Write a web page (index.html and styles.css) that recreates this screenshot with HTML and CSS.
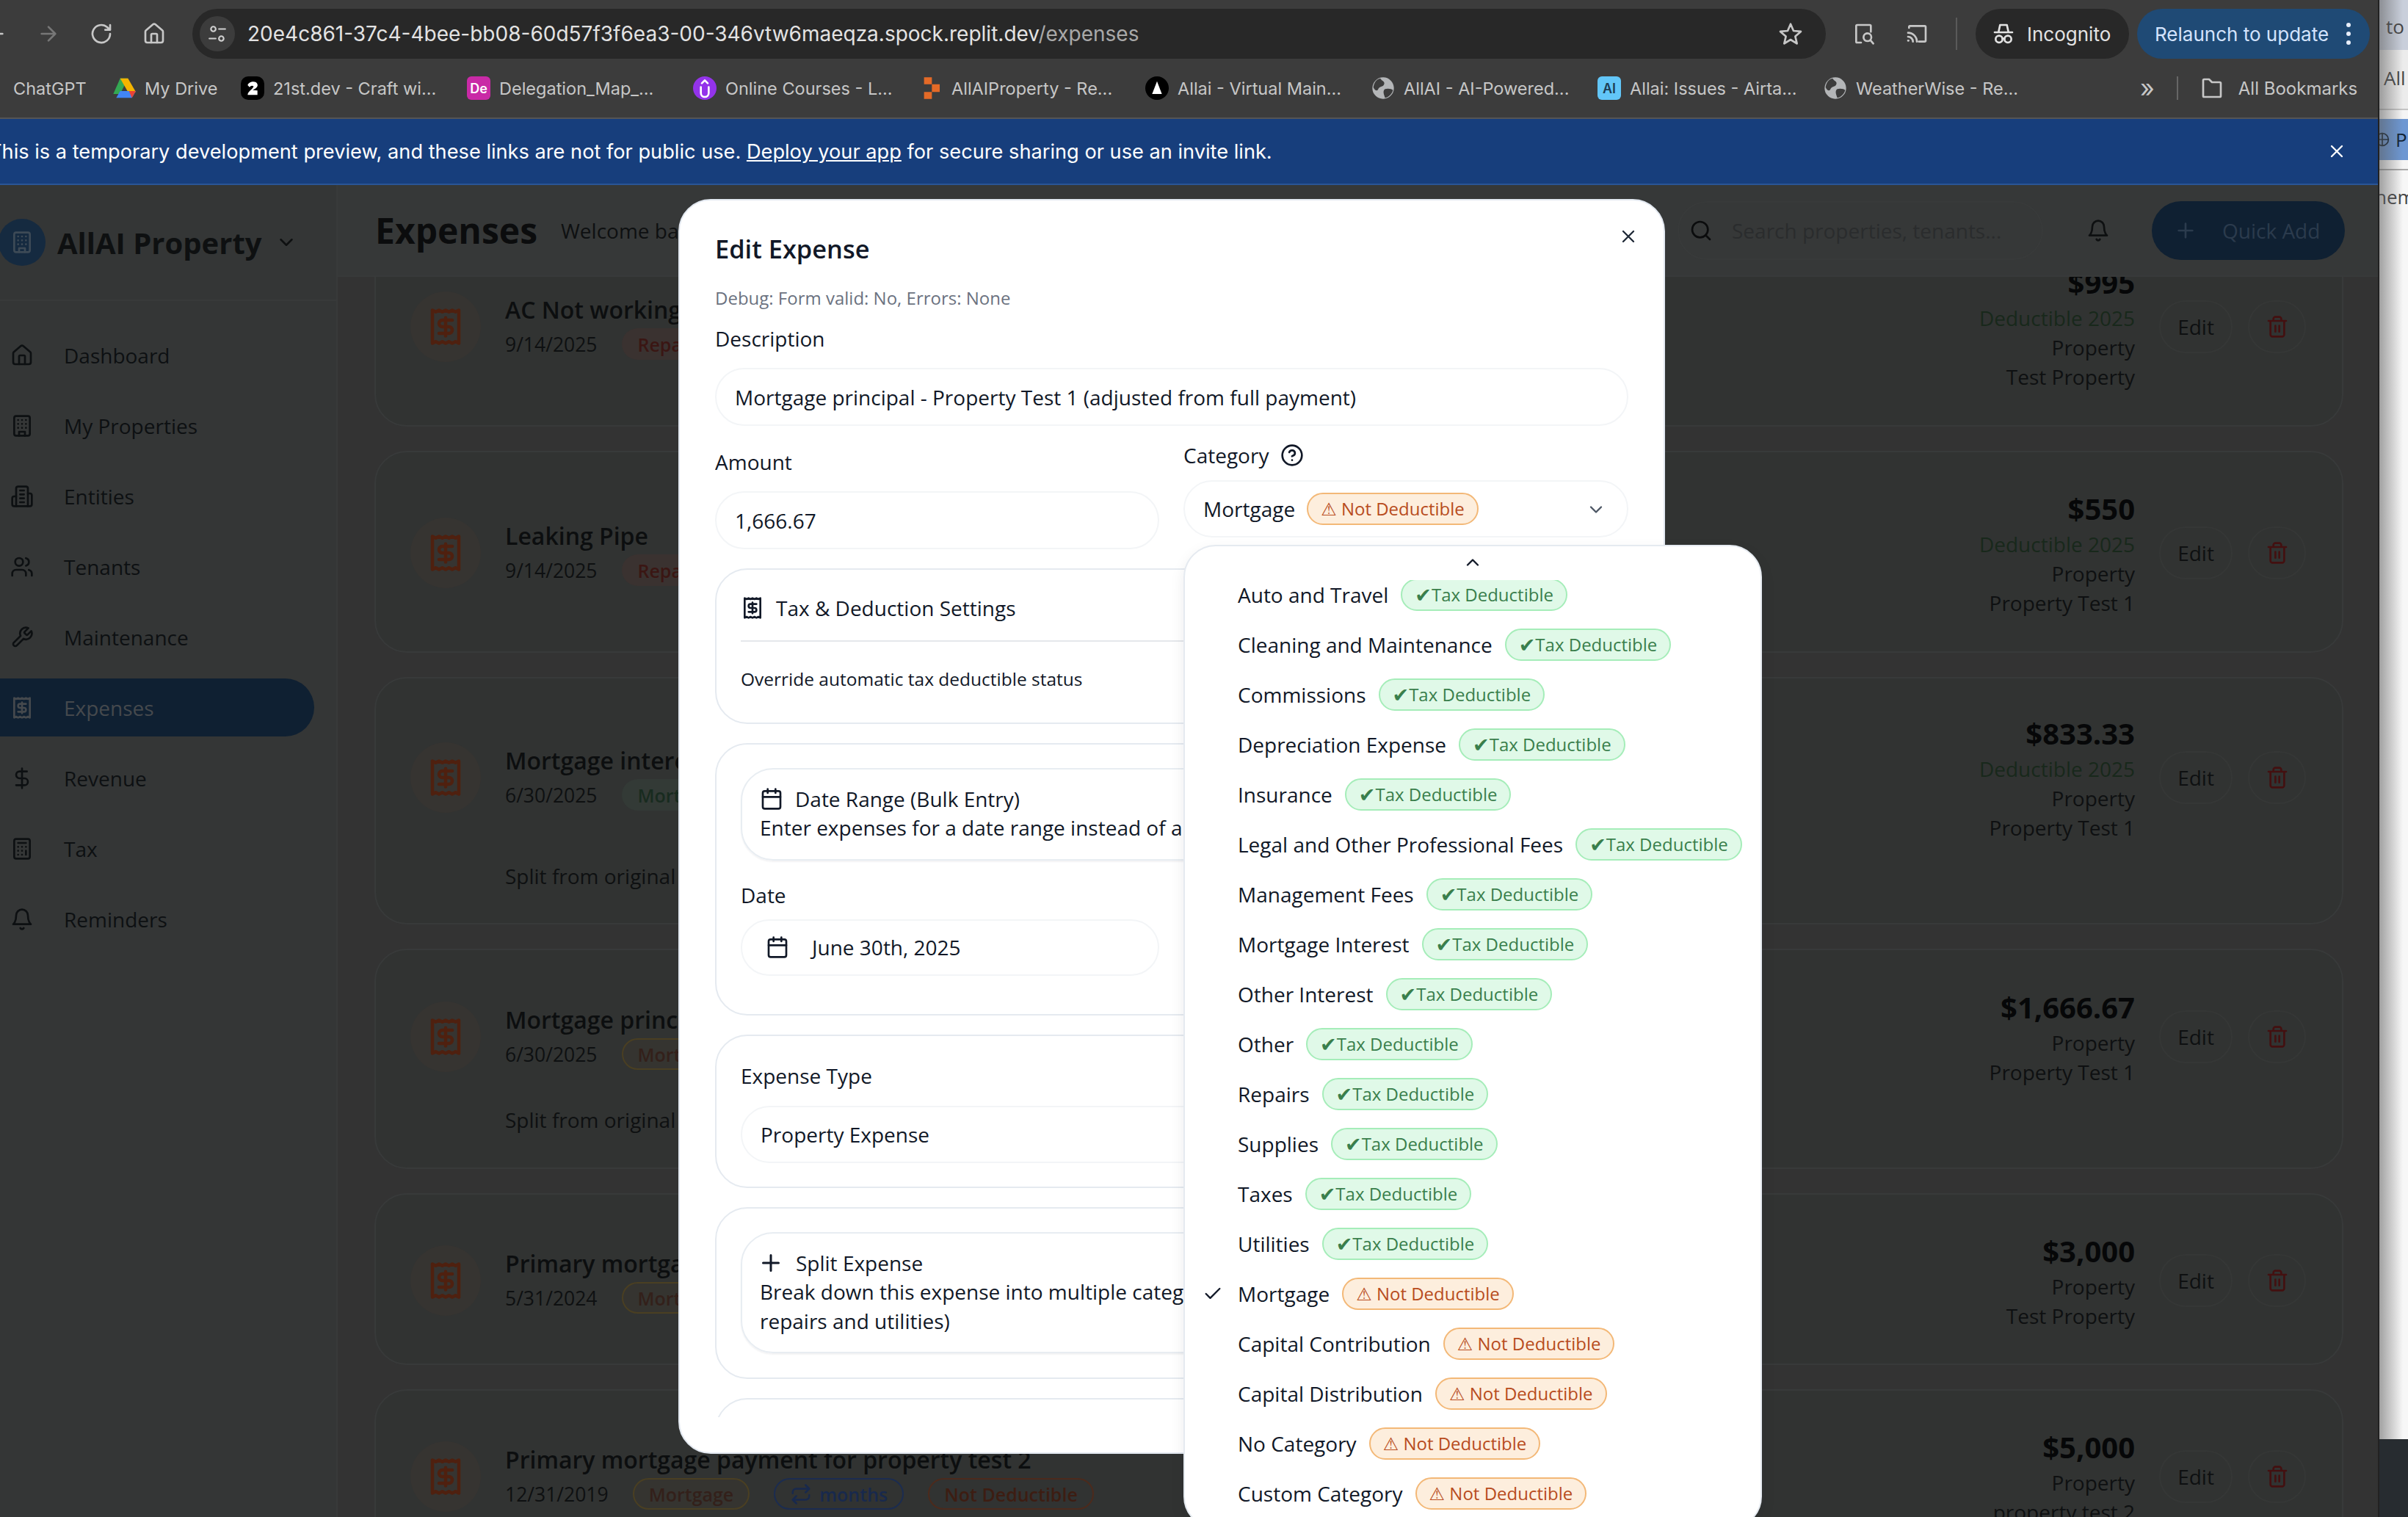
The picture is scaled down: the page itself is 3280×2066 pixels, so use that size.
FILE: index.html
```html
<!DOCTYPE html>
<html lang="en">
<head>
    <meta charset="UTF-8">
    <meta name="viewport" content="width=device-width, initial-scale=1.0">
    <title>Expenses - AllAI Property</title>
    <link rel="stylesheet" href="styles.css">
</head>
<body>
    <!-- lucide-style icons, reused with <use> -->
    <svg class="sprite" aria-hidden="true">
        <symbol id="i-home" viewBox="0 0 24 24"><path d="M15 21v-8a1 1 0 0 0-1-1h-4a1 1 0 0 0-1 1v8"/><path d="M3 10a2 2 0 0 1 .709-1.528l7-5.999a2 2 0 0 1 2.582 0l7 5.999A2 2 0 0 1 21 10v9a2 2 0 0 1-2 2H5a2 2 0 0 1-2-2z"/></symbol>
        <symbol id="i-building" viewBox="0 0 24 24"><rect x="4" y="2" width="16" height="20" rx="2"/><path d="M9 22v-4h6v4M8 6h.01M16 6h.01M12 6h.01M12 10h.01M12 14h.01M16 10h.01M16 14h.01M8 10h.01M8 14h.01"/></symbol>
        <symbol id="i-entities" viewBox="0 0 24 24"><path d="M6 22V4a2 2 0 0 1 2-2h8a2 2 0 0 1 2 2v18Z"/><path d="M6 12H4a2 2 0 0 0-2 2v6a2 2 0 0 0 2 2h2M18 9h2a2 2 0 0 1 2 2v9a2 2 0 0 1-2 2h-2M10 6h4M10 10h4M10 14h4M10 18h4"/></symbol>
        <symbol id="i-users" viewBox="0 0 24 24"><path d="M16 21v-2a4 4 0 0 0-4-4H6a4 4 0 0 0-4 4v2"/><circle cx="9" cy="7" r="4"/><path d="M22 21v-2a4 4 0 0 0-3-3.87M16 3.13a4 4 0 0 1 0 7.75"/></symbol>
        <symbol id="i-wrench" viewBox="0 0 24 24"><path d="M14.7 6.3a1 1 0 0 0 0 1.4l1.6 1.6a1 1 0 0 0 1.4 0l3.77-3.77a6 6 0 0 1-7.94 7.94l-6.91 6.91a2.12 2.12 0 0 1-3-3l6.91-6.91a6 6 0 0 1 7.94-7.94l-3.76 3.76z"/></symbol>
        <symbol id="i-receipt" viewBox="0 0 24 24"><path d="M4 2v20l2-1 2 1 2-1 2 1 2-1 2 1 2-1 2 1V2l-2 1-2-1-2 1-2-1-2 1-2-1-2 1Z"/><path d="M16 8h-6a2 2 0 1 0 0 4h4a2 2 0 1 1 0 4H8M12 17.5v-11"/></symbol>
        <symbol id="i-dollar" viewBox="0 0 24 24"><path d="M12 2v20M17 5H9.5a3.5 3.5 0 0 0 0 7h5a3.5 3.5 0 0 1 0 7H6"/></symbol>
        <symbol id="i-calc" viewBox="0 0 24 24"><rect x="4" y="2" width="16" height="20" rx="2"/><path d="M8 6h8M16 14v4M16 10h.01M12 10h.01M8 10h.01M12 14h.01M8 14h.01M12 18h.01M8 18h.01"/></symbol>
        <symbol id="i-bell" viewBox="0 0 24 24"><path d="M6 8a6 6 0 0 1 12 0c0 7 3 9 3 9H3s3-2 3-9M10.3 21a1.94 1.94 0 0 0 3.4 0"/></symbol>
        <symbol id="i-down" viewBox="0 0 24 24"><path d="m6 9 6 6 6-6"/></symbol>
        <symbol id="i-up" viewBox="0 0 24 24"><path d="m18 15-6-6-6 6"/></symbol>
        <symbol id="i-search" viewBox="0 0 24 24"><circle cx="11" cy="11" r="8"/><path d="m21 21-4.3-4.3"/></symbol>
        <symbol id="i-plus" viewBox="0 0 24 24"><path d="M5 12h14M12 5v14"/></symbol>
        <symbol id="i-x" viewBox="0 0 24 24"><path d="M18 6 6 18M6 6l12 12"/></symbol>
        <symbol id="i-trash" viewBox="0 0 24 24"><path d="M3 6h18M19 6v14c0 1-1 2-2 2H7c-1 0-2-1-2-2V6M8 6V4c0-1 1-2 2-2h4c1 0 2 1 2 2v2M10 11v6M14 11v6"/></symbol>
        <symbol id="i-calendar" viewBox="0 0 24 24"><path d="M8 2v4M16 2v4M3 10h18"/><rect x="3" y="4" width="18" height="18" rx="2"/></symbol>
        <symbol id="i-help" viewBox="0 0 24 24"><circle cx="12" cy="12" r="10"/><path d="M9.09 9a3 3 0 0 1 5.83 1c0 2-3 3-3 3M12 17h.01"/></symbol>
        <symbol id="i-check" viewBox="0 0 24 24"><path d="M20 6 9 17l-5-5"/></symbol>
        <symbol id="i-swap" viewBox="0 0 24 24"><path d="m17 2 4 4-4 4M3 11v-1a4 4 0 0 1 4-4h14M7 22l-4-4 4-4M21 13v1a4 4 0 0 1-4 4H3"/></symbol>
        <symbol id="i-globe" viewBox="0 0 24 24"><circle cx="12" cy="12" r="11" fill="#b4b6b8" stroke="none"/><path d="M9 2c2 3 5 3 4 6s-5 2-6 5-4 1-5-2c1-5 3-8 7-9ZM14 13c3-1 7 0 8 1-1 4-4 7-8 8-1-3-3-7 0-9Z" fill="#3c3c3c" stroke="none"/></symbol>
    </svg>

    <div class="window">
        <!-- browser chrome -->
        <div class="toolbar">
            <span class="tool tool-back"><svg class="icon" viewBox="0 0 24 24"><path d="M19 12H5M12 5l-7 7 7 7"/></svg></span>
            <span class="tool tool-off"><svg class="icon" viewBox="0 0 24 24"><path d="M5 12h14M12 5l7 7-7 7"/></svg></span>
            <span class="tool"><svg class="icon" viewBox="0 0 24 24"><path d="M21 12a9 9 0 1 1-3-6.7L21 8M21 3v5h-5"/></svg></span>
            <span class="tool"><svg class="icon"><use href="#i-home"/></svg></span>
            <div class="address">
                <span class="site-info">
                    <svg class="icon-sm" viewBox="0 0 24 24"><circle cx="7" cy="6" r="3"/><path d="M14 6h8M2 18h8"/><circle cx="17" cy="18" r="3"/></svg>
                </span>
                <span class="url">20e4c861-37c4-4bee-bb08-60d57f3f6ea3-00-346vtw6maeqza.spock.replit.dev<span class="url-path">/expenses</span></span>
                <svg class="icon star" viewBox="0 0 24 24"><path d="m12 2 3 7 7.500.7-5.700 5 1.700 7.300L12 18l-6.500 4 1.700-7.300-5.700-5L9 9z"/></svg>
            </div>
            <span class="tool tool-gap"><svg class="icon" viewBox="0 0 24 24"><path d="M9 21H5a1 1 0 0 1-1-1V4a1 1 0 0 1 1-1h13a1 1 0 0 1 1 1v6"/><circle cx="15.500" cy="15.500" r="4"/><path d="m18.500 18.500 3 3.500"/></svg></span>
            <span class="tool"><svg class="icon" viewBox="0 0 24 24"><path d="M4 6V5a1 1 0 0 1 1-1h15a1 1 0 0 1 1 1v14a1 1 0 0 1-1 1h-6M3 11a9 9 0 0 1 9 9M3 15a5 5 0 0 1 5 5M3 19h.5"/></svg></span>
            <span class="tool-sep"></span>
            <div class="chip chip-incognito">
                <svg class="icon" viewBox="0 0 24 24"><path d="M7 10 8.500 3h7L17 10M3 10.500h18"/><circle cx="7.500" cy="17.500" r="3.500"/><circle cx="16.500" cy="17.500" r="3.500"/><path d="M11 17h2"/></svg>
                Incognito
            </div>
            <div class="chip chip-relaunch">
                Relaunch to update
                <span class="dots"><i></i><i></i><i></i></span>
            </div>
        </div>

        <div class="bookmarks">
            <div class="bm bm-first">ChatGPT</div>
            <div class="bm bm-drive">
                <svg class="fav" viewBox="0 0 24 24"><path d="M8 2h8L12 10 8 18H1Z" fill="#34a853"/><path d="M8 2h8l8 14h-8Z" fill="#f4b400"/><path d="M4 22l4-7h16l-4 7Z" fill="#4285f4"/><path d="M17 15h7l-4 7Z" fill="#ea4335"/></svg>
                My Drive
            </div>
            <div class="bm bm-fixed">
                <svg class="fav fav-21st" viewBox="0 0 24 24"><path d="M7 9c1-4 9-5 10-1 1 3-3 5-5 6l5 .5V19H7c0-4 6-6 6-9-2-1-3 0-4 1Z" fill="#fff"/></svg>
                21st.dev - Craft wi...
            </div>
            <div class="bm bm-fixed">
                <span class="fav fav-de">De</span>
                Delegation_Map_...
            </div>
            <div class="bm bm-fixed">
                <svg class="fav fav-u" viewBox="0 0 24 24"><path d="M8 11v6a4 4 0 0 0 8 0v-6M9 7l3-3 3 3" stroke="#fff" stroke-width="2" fill="none"/></svg>
                Online Courses - L...
            </div>
            <div class="bm bm-fixed">
                <svg class="fav" viewBox="0 0 24 24"><path d="M5 1h8v7H5ZM13 8h8v8h-8ZM5 16h8v7H5Z" fill="#e46a27"/></svg>
                AllAIProperty - Re...
            </div>
            <div class="bm bm-fixed">
                <svg class="fav" viewBox="0 0 24 24"><circle cx="12" cy="12" r="12" fill="#000"/><path d="M12 5l5 13H7Z" fill="#fff"/></svg>
                Allai - Virtual Main...
            </div>
            <div class="bm bm-fixed">
                <svg class="fav"><use href="#i-globe"/></svg>
                AllAI - AI-Powered...
            </div>
            <div class="bm bm-fixed">
                <span class="fav fav-al">AI</span>
                Allai: Issues - Airta...
            </div>
            <div class="bm bm-fixed">
                <svg class="fav"><use href="#i-globe"/></svg>
                WeatherWise - Re...
            </div>
            <span class="bm-more">»</span>
            <span class="bm-sep"></span>
            <div class="bm bm-all">
                <svg class="fav fav-folder" viewBox="0 0 24 24"><path d="M4 21a1 1 0 0 1-1-1V4a1 1 0 0 1 1-1h5l3 3h8a1 1 0 0 1 1 1v13a1 1 0 0 1-1 1Z"/></svg>
                All Bookmarks
            </div>
        </div>

        <div class="banner">
            <p>This is a temporary development preview, and these links are not for public use. <a href="#">Deploy your app</a> for secure sharing or use an invite link.</p>
            <svg class="banner-close"><use href="#i-x"/></svg>
        </div>

        <!-- app, dimmed behind the dialog -->
        <div class="app">
            <aside class="sidebar">
                <div class="brand">
                    <span class="brand-logo"><svg class="icon"><use href="#i-building"/></svg></span>
                    <span class="brand-name">AllAI Property</span>
                    <svg class="brand-chevron"><use href="#i-down"/></svg>
                </div>
                <nav class="nav">
                    <a class="nav-item"><svg class="icon"><use href="#i-home"/></svg>Dashboard</a>
                    <a class="nav-item"><svg class="icon"><use href="#i-building"/></svg>My Properties</a>
                    <a class="nav-item"><svg class="icon"><use href="#i-entities"/></svg>Entities</a>
                    <a class="nav-item"><svg class="icon"><use href="#i-users"/></svg>Tenants</a>
                    <a class="nav-item"><svg class="icon"><use href="#i-wrench"/></svg>Maintenance</a>
                    <a class="nav-item active"><svg class="icon"><use href="#i-receipt"/></svg>Expenses</a>
                    <a class="nav-item"><svg class="icon"><use href="#i-dollar"/></svg>Revenue</a>
                    <a class="nav-item"><svg class="icon"><use href="#i-calc"/></svg>Tax</a>
                    <a class="nav-item"><svg class="icon"><use href="#i-bell"/></svg>Reminders</a>
                </nav>
            </aside>

            <main class="main">
                <header class="main-header">
                    <h1>Expenses</h1>
                    <span class="welcome">Welcome back, Ash</span>
                    <div class="search">
                        <svg class="icon"><use href="#i-search"/></svg>
                        <span>Search properties, tenants...</span>
                    </div>
                    <svg class="icon header-bell"><use href="#i-bell"/></svg>
                    <div class="quick-add"><svg class="icon"><use href="#i-plus"/></svg>Quick Add</div>
                </header>

                <div class="list-clip">
                    <div class="list">
                        <article class="card card-plain">
                            <div class="card-row">
                                <span class="receipt"><svg><use href="#i-receipt"/></svg></span>
                                <div class="info">
                                    <h3>AC Not working</h3>
                                    <div class="meta"><span class="date">9/14/2025</span><span class="tag tag-red">Repairs</span></div>
                                </div>
                                <div class="figures">
                                    <strong>$995</strong>
                                    <span class="deduct">Deductible 2025</span>
                                    <span>Property</span>
                                    <span>Test Property</span>
                                </div>
                                <div class="actions"><span class="btn-edit">Edit</span><span class="btn-trash"><svg><use href="#i-trash"/></svg></span></div>
                            </div>
                        </article>

                        <article class="card card-plain">
                            <div class="card-row">
                                <span class="receipt"><svg><use href="#i-receipt"/></svg></span>
                                <div class="info">
                                    <h3>Leaking Pipe</h3>
                                    <div class="meta"><span class="date">9/14/2025</span><span class="tag tag-red">Repairs</span></div>
                                </div>
                                <div class="figures">
                                    <strong>$550</strong>
                                    <span class="deduct">Deductible 2025</span>
                                    <span>Property</span>
                                    <span>Property Test 1</span>
                                </div>
                                <div class="actions"><span class="btn-edit">Edit</span><span class="btn-trash"><svg><use href="#i-trash"/></svg></span></div>
                            </div>
                        </article>

                        <article class="card card-split-tall">
                            <div class="card-row">
                                <span class="receipt"><svg><use href="#i-receipt"/></svg></span>
                                <div class="info">
                                    <h3>Mortgage interest</h3>
                                    <div class="meta"><span class="date">6/30/2025</span><span class="tag tag-green">Mortgage Interest</span></div>
                                </div>
                                <div class="figures">
                                    <strong>$833.33</strong>
                                    <span class="deduct">Deductible 2025</span>
                                    <span>Property</span>
                                    <span>Property Test 1</span>
                                </div>
                                <div class="actions"><span class="btn-edit">Edit</span><span class="btn-trash"><svg><use href="#i-trash"/></svg></span></div>
                            </div>
                            <p class="note">Split from original</p>
                        </article>

                        <article class="card card-split">
                            <div class="card-row">
                                <span class="receipt"><svg><use href="#i-receipt"/></svg></span>
                                <div class="info">
                                    <h3>Mortgage principal</h3>
                                    <div class="meta"><span class="date">6/30/2025</span><span class="tag tag-amber">Mortgage</span></div>
                                </div>
                                <div class="figures">
                                    <strong>$1,666.67</strong>
                                    <span>Property</span>
                                    <span>Property Test 1</span>
                                </div>
                                <div class="actions"><span class="btn-edit">Edit</span><span class="btn-trash"><svg><use href="#i-trash"/></svg></span></div>
                            </div>
                            <p class="note">Split from original</p>
                        </article>

                        <article class="card card-short">
                            <div class="card-row">
                                <span class="receipt"><svg><use href="#i-receipt"/></svg></span>
                                <div class="info">
                                    <h3>Primary mortgage payment</h3>
                                    <div class="meta"><span class="date">5/31/2024</span><span class="tag tag-amber">Mortgage</span></div>
                                </div>
                                <div class="figures">
                                    <strong>$3,000</strong>
                                    <span>Property</span>
                                    <span>Test Property</span>
                                </div>
                                <div class="actions"><span class="btn-edit">Edit</span><span class="btn-trash"><svg><use href="#i-trash"/></svg></span></div>
                            </div>
                        </article>

                        <article class="card card-short">
                            <div class="card-row">
                                <span class="receipt"><svg><use href="#i-receipt"/></svg></span>
                                <div class="info">
                                    <h3>Primary mortgage payment for property test 2</h3>
                                    <div class="meta">
                                        <span class="date">12/31/2019</span>
                                        <span class="tag tag-amber">Mortgage</span>
                                        <span class="tag tag-blue"><svg><use href="#i-swap"/></svg>months</span>
                                        <span class="tag tag-rust">Not Deductible</span>
                                    </div>
                                </div>
                                <div class="figures">
                                    <strong>$5,000</strong>
                                    <span>Property</span>
                                    <span>property test 2</span>
                                </div>
                                <div class="actions"><span class="btn-edit">Edit</span><span class="btn-trash"><svg><use href="#i-trash"/></svg></span></div>
                            </div>
                        </article>
                    </div>
                </div>
            </main>
        </div>

        <!-- Edit Expense dialog -->
        <section class="modal">
            <svg class="modal-close"><use href="#i-x"/></svg>
            <h2>Edit Expense</h2>
            <p class="debug">Debug: Form valid: No, Errors: None</p>
            <div class="modal-scroll">
                <label class="label label-first">Description</label>
                <div class="input input-desc">Mortgage principal - Property Test 1 (adjusted from full payment)</div>

                <div class="form-row">
                    <div class="field-amount">
                        <label class="label">Amount</label>
                        <div class="input input-amount">1,666.67</div>
                    </div>
                    <div class="field-category">
                        <label class="label label-help">Category <svg><use href="#i-help"/></svg></label>
                        <div class="input input-select">
                            Mortgage <span class="pill pill-no">⚠ Not Deductible</span>
                            <svg class="select-chevron"><use href="#i-down"/></svg>
                        </div>
                    </div>
                </div>

                <div class="section section-tax">
                    <div class="tax-head"><svg><use href="#i-receipt"/></svg>Tax &amp; Deduction Settings</div>
                    <p class="tax-override">Override automatic tax deductible status</p>
                </div>

                <div class="section section-date">
                    <div class="toggle">
                        <div class="toggle-title"><svg><use href="#i-calendar"/></svg>Date Range (Bulk Entry)</div>
                        <p>Enter expenses for a date range instead of a</p>
                    </div>
                    <label class="label label-date">Date</label>
                    <div class="input input-date"><svg><use href="#i-calendar"/></svg>June 30th, 2025</div>
                </div>

                <div class="section section-type">
                    <label class="label">Expense Type</label>
                    <div class="input input-type">Property Expense</div>
                </div>

                <div class="section section-split">
                    <div class="toggle">
                        <div class="toggle-title"><svg class="plus"><use href="#i-plus"/></svg>Split Expense</div>
                        <p>Break down this expense into multiple categ<br>repairs and utilities)</p>
                    </div>
                </div>

                <div class="section section-next"></div>
            </div>
        </section>

        <!-- category dropdown, opened over the dialog -->
        <div class="dropdown">
            <div class="scroll-up"><svg><use href="#i-up"/></svg></div>
            <div class="options-clip">
                <ul class="options">
                    <li>Auto and Travel <span class="pill pill-yes"><i class="chk">✔</i>Tax Deductible</span></li>
                    <li>Cleaning and Maintenance <span class="pill pill-yes"><i class="chk">✔</i>Tax Deductible</span></li>
                    <li>Commissions <span class="pill pill-yes"><i class="chk">✔</i>Tax Deductible</span></li>
                    <li>Depreciation Expense <span class="pill pill-yes"><i class="chk">✔</i>Tax Deductible</span></li>
                    <li>Insurance <span class="pill pill-yes"><i class="chk">✔</i>Tax Deductible</span></li>
                    <li>Legal and Other Professional Fees <span class="pill pill-yes"><i class="chk">✔</i>Tax Deductible</span></li>
                    <li>Management Fees <span class="pill pill-yes"><i class="chk">✔</i>Tax Deductible</span></li>
                    <li>Mortgage Interest <span class="pill pill-yes"><i class="chk">✔</i>Tax Deductible</span></li>
                    <li>Other Interest <span class="pill pill-yes"><i class="chk">✔</i>Tax Deductible</span></li>
                    <li>Other <span class="pill pill-yes"><i class="chk">✔</i>Tax Deductible</span></li>
                    <li>Repairs <span class="pill pill-yes"><i class="chk">✔</i>Tax Deductible</span></li>
                    <li>Supplies <span class="pill pill-yes"><i class="chk">✔</i>Tax Deductible</span></li>
                    <li>Taxes <span class="pill pill-yes"><i class="chk">✔</i>Tax Deductible</span></li>
                    <li>Utilities <span class="pill pill-yes"><i class="chk">✔</i>Tax Deductible</span></li>
                    <li class="selected"><svg class="tick"><use href="#i-check"/></svg>Mortgage <span class="pill pill-no">⚠ Not Deductible</span></li>
                    <li>Capital Contribution <span class="pill pill-no">⚠ Not Deductible</span></li>
                    <li>Capital Distribution <span class="pill pill-no">⚠ Not Deductible</span></li>
                    <li>No Category <span class="pill pill-no">⚠ Not Deductible</span></li>
                    <li>Custom Category <span class="pill pill-no">⚠ Not Deductible</span></li>
                </ul>
            </div>
        </div>
    </div>

    <!-- sliver of the window behind -->
    <div class="behind">
        <div class="behind-tab">to</div>
        <div class="behind-marks">All</div>
        <div class="behind-blue"><svg viewBox="0 0 24 24"><circle cx="12" cy="12" r="10"/><path d="M2 12h20M12 2v20"/></svg>P</div>
        <div class="behind-page"><span>hem</span></div>
        <div class="behind-dock"></div>
    </div>
</body>
</html>
```

FILE: styles.css
```css
/* page */
* {
    box-sizing: border-box;
}

html,
body {
    margin: 0;
    height: 2066px;
    overflow: hidden;
}

body {
    display: flex;
    font-family: "Open Sans", "DejaVu Sans", sans-serif;
    font-size: 28px;
    color: #111827;
    background: #fff;
}

svg {
    fill: none;
    stroke: currentColor;
    stroke-width: 2;
    stroke-linecap: round;
    stroke-linejoin: round;
    flex-shrink: 0;
}

h1,
h2,
h3,
p,
ul {
    margin: 0;
    padding: 0;
}

.sprite {
    display: none;
}

.icon {
    width: 32px;
    height: 32px;
}

.icon-sm {
    width: 26px;
    height: 26px;
}

.window {
    position: relative;
    display: flex;
    flex-direction: column;
    width: 3241px;
    height: 2066px;
    overflow: hidden;
    flex-shrink: 0;
    background: #333;
    border-right: 2px solid #222;
}

/* browser toolbar */
.toolbar {
    display: flex;
    align-items: center;
    height: 92px;
    background: #3c3c3c;
    color: #c7c7c7;
    font-family: Inter, "Liberation Sans", sans-serif;
    font-size: 26px;
}

.tool {
    display: flex;
    align-items: center;
    justify-content: center;
    width: 72px;
    height: 68px;
    flex-shrink: 0;
}

.tool-back {
    margin-left: -42px;
}

.tool-off {
    color: #777;
}

.tool-gap {
    margin-left: 16px;
}

.tool-sep {
    width: 2px;
    height: 44px;
    margin-left: 17px;
    background: #5a5a5a;
}

.address {
    display: flex;
    align-items: center;
    width: 2225px;
    height: 68px;
    margin-left: 16px;
    padding: 0 32px 0 10px;
    border-radius: 34px;
    background: #282828;
    flex-shrink: 0;
}

.site-info {
    display: flex;
    align-items: center;
    justify-content: center;
    width: 48px;
    height: 48px;
    border-radius: 50%;
    background: #3c3c3c;
    color: #d0d0d0;
}

.url {
    margin-left: 17px;
    color: #e3e3e3;
    font-size: 28px;
    white-space: nowrap;
    flex: 1;
}

.url-path {
    color: #a9a9a9;
}

.chip {
    display: flex;
    align-items: center;
    height: 68px;
    border-radius: 34px;
    white-space: nowrap;
    flex-shrink: 0;
}

.chip-incognito {
    gap: 16px;
    width: 209px;
    margin-left: 25px;
    padding-left: 22px;
    background: #282828;
    color: #e3e3e3;
}

.chip-relaunch {
    justify-content: space-between;
    width: 317px;
    margin-left: 11px;
    padding: 0 26px 0 24px;
    background: #1f4a75;
    color: #d3e3fd;
}

.dots {
    display: flex;
    flex-direction: column;
    gap: 6px;
}

.dots i {
    width: 6px;
    height: 6px;
    border-radius: 50%;
    background: #e8eefa;
}

/* bookmarks bar */
.bookmarks {
    display: flex;
    align-items: center;
    height: 70px;
    padding-bottom: 12px;
    background: #3c3c3c;
    border-bottom: 2px solid #555;
    color: #c7c7c7;
    font-family: Inter, "Liberation Sans", sans-serif;
    font-size: 23.5px;
}

.bm {
    display: flex;
    align-items: center;
    gap: 12px;
    white-space: nowrap;
    flex-shrink: 0;
}

.bm-first {
    margin-left: 18px;
    width: 135px;
}

.bm-drive {
    width: 175px;
}

.bm-fixed {
    width: 308px;
}

.fav {
    display: flex;
    align-items: center;
    justify-content: center;
    width: 32px;
    height: 32px;
    flex-shrink: 0;
    font-size: 18px;
    font-weight: 600;
    stroke: none;
}

.fav-21st {
    background: #000;
    border-radius: 10px;
}

.fav-de {
    background: #c92aa6;
    border-radius: 6px;
    color: #fff;
}

.fav-u {
    background: #9333ea;
    border-radius: 50%;
}

.fav-al {
    background: #62c6f8;
    border-radius: 6px;
    color: #1d3d55;
}

.fav-folder {
    stroke: currentColor;
    stroke-width: 2;
}

.bm-more {
    margin-left: 123px;
    font-size: 34px;
    line-height: 30px;
    flex-shrink: 0;
}

.bm-sep {
    width: 2px;
    height: 32px;
    margin-left: 30px;
    background: #666;
    flex-shrink: 0;
}

.bm-all {
    margin-left: 30px;
    gap: 20px;
    font-size: 24px;
}

/* replit banner */
.banner {
    display: flex;
    align-items: center;
    justify-content: space-between;
    height: 90px;
    padding: 0 42px 0 0;
    margin-left: -15px;
    background: #173e7c;
    border-bottom: 2px solid #2a5596;
    color: #fff;
    font-size: 27.2px;
    font-family: Inter, "Liberation Sans", sans-serif;
    flex-shrink: 0;
}

.banner a {
    color: #fff;
    text-decoration: underline;
}

.banner-close {
    width: 28px;
    height: 28px;
}

/* app behind the dialog */
.app {
    display: flex;
    flex: 1;
    min-height: 0;
    color: #0e1011;
}

.sidebar {
    width: 460px;
    flex-shrink: 0;
    background: #343636;
    border-right: 2px solid #383a3a;
}

.brand {
    display: flex;
    align-items: center;
    height: 158px;
    border-bottom: 2px solid #383a3a;
}

.brand-logo {
    display: flex;
    align-items: center;
    justify-content: center;
    width: 64px;
    height: 64px;
    margin-left: -2px;
    border-radius: 50%;
    background: #152a40;
    color: #3d4a56;
    flex-shrink: 0;
}

.brand-name {
    margin-left: 16px;
    font-size: 40px;
    font-weight: 700;
    white-space: nowrap;
}

.brand-chevron {
    width: 30px;
    height: 30px;
    margin-left: 18px;
}

.nav {
    display: flex;
    flex-direction: column;
    gap: 17px;
    padding-top: 34px;
}

.nav-item {
    display: flex;
    align-items: center;
    gap: 41px;
    width: 468px;
    height: 79px;
    margin-left: -40px;
    padding-left: 54px;
    border-radius: 40px;
    color: #0d1012;
}

.nav-item.active {
    background: #0f2032;
    color: #45494d;
}

.main {
    display: flex;
    flex-direction: column;
    flex: 1;
    min-width: 0;
}

.main-header {
    display: flex;
    align-items: center;
    height: 125px;
    padding: 0 45px 0 51px;
    background: #363838;
    border-bottom: 2px solid #383a3a;
    flex-shrink: 0;
}

.main-header h1 {
    font-size: 48px;
    font-weight: 700;
    color: #0b0c0d;
    line-height: 64px;
}

.welcome {
    margin-left: 32px;
    font-size: 28px;
    white-space: nowrap;
    width: 500px;
    flex-shrink: 0;
}

.search {
    display: flex;
    align-items: center;
    gap: 26px;
    width: 498px;
    height: 80px;
    margin-left: auto;
    padding-left: 14px;
    border-radius: 40px;
    border: 2px solid #383a3a;
    color: #0b0c0d;
}

.search span {
    color: #2a2c2d;
}

.header-bell {
    margin-left: 59px;
}

.quick-add {
    display: flex;
    align-items: center;
    gap: 34px;
    width: 263px;
    height: 80px;
    margin-left: 57px;
    padding-left: 30px;
    border-radius: 40px;
    background: #0f2032;
    color: #2b3b4d;
    flex-shrink: 0;
}

.list-clip {
    flex: 1;
    min-height: 0;
    overflow: hidden;
}

.list {
    display: flex;
    flex-direction: column;
    gap: 33px;
    margin-top: -71px;
    padding: 0 47px 0 50px;
}

.card {
    padding: 0 49px 0 47px;
    border: 2px solid #383a3a;
    border-radius: 44px;
    background: #313332;
    flex-shrink: 0;
}

.card-plain {
    height: 275px;
    padding-top: 89px;
}

.card-split-tall {
    height: 337px;
    padding-top: 87px;
}

.card-split {
    height: 300px;
    padding-top: 70px;
}

.card-short {
    height: 234px;
    padding-top: 69px;
}

.card-row {
    display: flex;
    align-items: center;
    height: 96px;
}

.receipt {
    display: flex;
    align-items: center;
    justify-content: center;
    width: 96px;
    height: 96px;
    border-radius: 50%;
    background: #363431;
    color: #4f200f;
    flex-shrink: 0;
}

.receipt svg {
    width: 54px;
    height: 54px;
    stroke-width: 2;
}

.info {
    flex: 1;
    min-width: 0;
    margin-left: 33px;
    margin-top: 1px;
}

.info h3 {
    font-size: 32px;
    font-weight: 600;
    line-height: 46px;
    white-space: nowrap;
    color: #0c0e0f;
}

.meta {
    display: flex;
    align-items: center;
    gap: 33px;
    height: 48px;
}

.date {
    font-size: 26.5px;
    color: #0e1011;
}

.tag {
    display: flex;
    align-items: center;
    gap: 10px;
    height: 43px;
    padding: 0 20px;
    border: 2px solid transparent;
    border-radius: 22px;
    font-size: 25px;
    font-weight: 600;
    white-space: nowrap;
}

.tag svg {
    width: 30px;
    height: 30px;
}

.tag-red {
    background: #3a3230;
    color: #3a1613;
}

.tag-green {
    background: #333a36;
    color: #182b1f;
}

.tag-amber {
    border-color: #4a3f22;
    background: #353430;
    color: #33201a;
}

.tag-blue {
    border-color: #1b2c50;
    color: #18294d;
}

.tag-rust {
    border-color: #4c2a1c;
    color: #3d1d12;
}

.figures {
    display: flex;
    flex-direction: column;
    align-items: flex-end;
    line-height: 40px;
    white-space: nowrap;
    color: #0e1011;
    flex-shrink: 0;
}

.figures strong {
    font-size: 40px;
    line-height: 56px;
    font-weight: 700;
    color: #060708;
}

.deduct {
    color: #18281b;
}

.actions {
    display: flex;
    align-items: center;
    gap: 21px;
    margin-left: 33px;
    flex-shrink: 0;
}

.btn-edit {
    display: flex;
    align-items: center;
    justify-content: center;
    width: 100px;
    height: 72px;
    border: 2px solid #353736;
    border-radius: 36px;
}

.btn-trash {
    display: flex;
    align-items: center;
    justify-content: center;
    width: 79px;
    height: 72px;
    border: 2px solid #353736;
    border-radius: 36px;
    color: #431010;
}

.btn-trash svg {
    width: 32px;
    height: 32px;
}

.note {
    line-height: 40px;
    margin-left: 129px;
    color: #0e1011;
}

.card-split-tall .note {
    margin-top: 66px;
}

.card-split .note {
    margin-top: 45px;
}

/* dialog */
.modal {
    position: absolute;
    left: 924px;
    top: 271px;
    width: 1344px;
    height: 1709px;
    padding: 42px 48px 0;
    border: 2px solid #e2e8f0;
    border-radius: 44px;
    background: #fff;
}

.modal-close {
    position: absolute;
    top: 35px;
    right: 34px;
    width: 28px;
    height: 28px;
    color: #1f2937;
}

.modal h2 {
    font-size: 34.4px;
    font-weight: 600;
    line-height: 48px;
}

.debug {
    margin-top: 27px;
    font-size: 24px;
    line-height: 32px;
    color: #6b7280;
}

.modal-scroll {
    height: 1508px;
    overflow: hidden;
}

.label {
    display: block;
    line-height: 36px;
}

.label-first {
    margin-top: 21px;
}

.input {
    display: flex;
    align-items: center;
    height: 79px;
    margin-top: 20px;
    padding: 0 25px;
    border: 2px solid #f3f5f7;
    border-radius: 40px;
    white-space: nowrap;
}

.input-desc {
    margin-top: 22px;
}

.form-row {
    display: grid;
    grid-template-columns: 605px 606px;
    gap: 33px;
    margin-top: 24px;
}

.field-amount {
    padding-top: 7px;
}

.input-amount {
    margin-top: 22px;
}

.label-help {
    display: flex;
    align-items: center;
    gap: 16px;
    height: 32px;
    line-height: 32px;
}

.label-help svg {
    width: 32px;
    height: 32px;
}

.input-select {
    gap: 16px;
    margin-top: 18px;
    height: 78px;
    position: relative;
}

.select-chevron {
    position: absolute;
    right: 28px;
    top: 24px;
    width: 28px;
    height: 28px;
    color: #4b5563;
}

.section {
    margin-top: 26px;
    padding: 32px 33px 0;
    border: 2px solid #e5eaf0;
    border-radius: 44px;
}

.section-tax {
    height: 212px;
}

.tax-head {
    display: flex;
    align-items: center;
    gap: 16px;
    height: 39px;
    line-height: 36px;
}

.tax-head svg {
    width: 32px;
    height: 32px;
}

.tax-override {
    margin-top: 25px;
    padding-top: 35px;
    border-top: 2px solid #e5e7eb;
    font-size: 24.5px;
    line-height: 32px;
}

.section-date {
    height: 371px;
}

.toggle {
    padding: 20px 32px 22px 24px;
    border: 2px solid #e8edf2;
    border-radius: 44px;
    box-shadow: 0 2px 2px rgba(15, 23, 42, 0.05);
}

.toggle-title {
    display: flex;
    align-items: center;
    gap: 16px;
    line-height: 40px;
}

.toggle-title svg {
    width: 32px;
    height: 32px;
}

.toggle p {
    line-height: 39.5px;
    white-space: nowrap;
}

.label-date {
    margin-top: 29px;
}

.input-date {
    width: 570px;
    height: 77px;
    margin-top: 15px;
    padding-left: 32px;
    gap: 31px;
}

.input-date svg {
    width: 32px;
    height: 32px;
}

.section-type {
    height: 209px;
    padding-top: 36px;
}

.input-type {
    height: 78px;
    margin-top: 23px;
}

.section-split {
    height: 234px;
}

.section-split .plus {
    width: 36px;
    height: 36px;
    margin-left: -3px;
}

.section-next {
    height: 120px;
}

/* category dropdown */
.dropdown {
    position: absolute;
    left: 1612px;
    top: 742px;
    width: 788px;
    height: 1340px;
    border: 2px solid #e5eaf0;
    border-radius: 44px;
    background: #fff;
    box-shadow: 0 8px 20px rgba(15, 23, 42, 0.08);
}

.scroll-up {
    display: flex;
    justify-content: center;
    height: 46px;
    padding-top: 8px;
}

.scroll-up svg {
    width: 28px;
    height: 28px;
}

.options-clip {
    height: 1280px;
    overflow: hidden;
}

.options {
    list-style: none;
    margin-top: -14px;
    padding-left: 72px;
}

.options li {
    position: relative;
    display: flex;
    align-items: center;
    gap: 17px;
    height: 68px;
    white-space: nowrap;
}

.tick {
    position: absolute;
    left: -48px;
    top: 20px;
    width: 28px;
    height: 28px;
}

.pill {
    display: inline-flex;
    align-items: center;
    height: 44px;
    margin-top: -1px;
    padding: 0 17px;
    border: 2px solid;
    border-radius: 22px;
    font-size: 24px;
    font-weight: 500;
    white-space: nowrap;
}

.chk {
    font-style: normal;
    font-size: 27px;
    line-height: 1;
}

.pill-yes {
    border-color: #a5edb9;
    background: #e0f9e8;
    color: #3a7f4c;
}

.pill-no {
    border-color: #f3b877;
    background: #fdeedd;
    color: #b84c20;
}

/* other window */
.behind {
    position: relative;
    display: flex;
    flex-direction: column;
    flex: 1;
    overflow: hidden;
    background: #f5f5f5;
    color: #444;
    font-size: 26px;
}

.behind::after {
    content: "";
    position: absolute;
    top: 0;
    bottom: 106px;
    left: 0;
    width: 32px;
    background: linear-gradient(to right, rgba(90, 90, 90, 0.55), rgba(90, 90, 90, 0));
}

.behind-tab {
    height: 68px;
    padding: 18px 0 0 9px;
    background: #c9cfdb;
}

.behind-marks {
    height: 82px;
    padding: 20px 0 0 6px;
    background: #ececec;
    border-bottom: 2px solid #c4c4c4;
}

.behind-blue {
    display: flex;
    align-items: center;
    gap: 8px;
    height: 56px;
    margin-top: 12px;
    padding-left: 0;
    background: #6d97d2;
    color: #123;
}

.behind-blue svg {
    width: 20px;
    height: 30px;
    margin-left: -6px;
}

.behind-page {
    flex: 1;
    margin-top: 12px;
    border-top: 2px solid #aaa;
    background: #f7f7f7;
}

.behind-page span {
    display: block;
    margin: 18px 0 0 -6px;
}

.behind-dock {
    height: 106px;
    background: #272c30;
}
```
